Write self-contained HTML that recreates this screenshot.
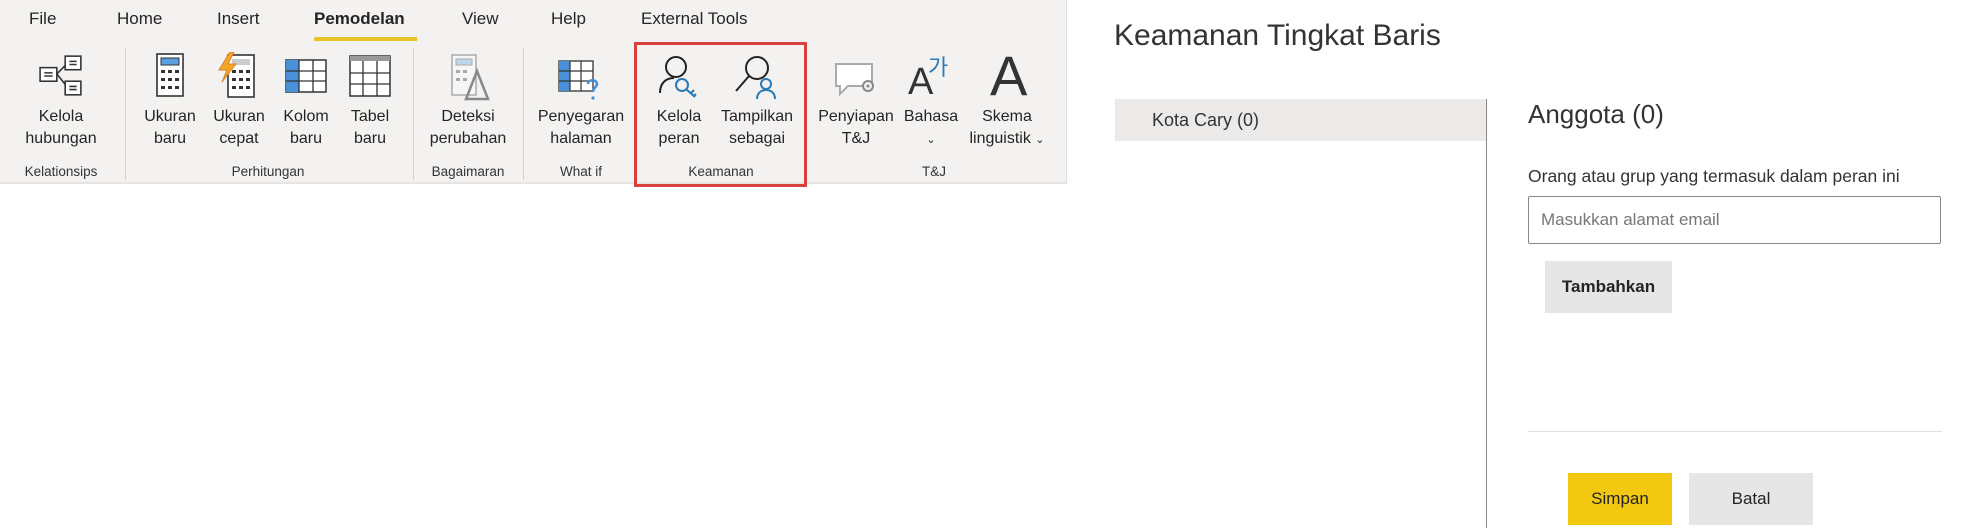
<!DOCTYPE html>
<html><head><meta charset="utf-8">
<style>
*{margin:0;padding:0;box-sizing:border-box}
body{width:1984px;height:528px;background:#fff;font-family:"Liberation Sans",sans-serif;color:#252423;position:relative;overflow:hidden}
.rib{position:absolute;left:0;top:0;width:1067px;height:184px;background:#f3f2f1;border-right:1px solid #e1dfdd;border-bottom:2px solid #e6e5e4}
.a{position:absolute;white-space:nowrap}
.tab{font-size:17px;top:9px}
.lbl{font-size:16px;line-height:22px;text-align:center;transform:translateX(-50%);top:106px}
.grp{font-size:13.5px;top:164px;transform:translateX(-50%);color:#333}
.sep{position:absolute;top:48px;width:1px;height:132px;background:#d2d0ce}
svg{position:absolute}
</style></head><body>
<div class="rib">
<div class="a tab" style="left:29px">File</div>
<div class="a tab" style="left:117px">Home</div>
<div class="a tab" style="left:217px">Insert</div>
<div class="a tab" style="left:314px;font-weight:bold">Pemodelan</div>
<div style="position:absolute;left:314px;top:37px;width:103px;height:4px;background:#e8c32a"></div>
<div class="a tab" style="left:462px">View</div>
<div class="a tab" style="left:551px">Help</div>
<div class="a tab" style="left:641px">External Tools</div>

<div class="sep" style="left:125px"></div>
<div class="sep" style="left:413px"></div>
<div class="sep" style="left:523px"></div>

<svg style="left:38px;top:53px" width="46" height="46" viewBox="0 0 44 44" fill="#fff" stroke="#333" stroke-width="1.5">
<rect x="2" y="14" width="16" height="13"/><rect x="26" y="3" width="15" height="13"/><rect x="26" y="27" width="15" height="13"/>
<path d="M18 20 L26 12 M18 20 L26 30 M6 19h8M6 22h8M30 8h7M30 11h7M30 32h7M30 35h7" fill="none"/></svg>

<svg style="left:156px;top:53px" width="28" height="44" viewBox="0 0 28 44"><rect x="1" y="1" width="26" height="42" fill="#fff" stroke="#333" stroke-width="1.6"/><rect x="5" y="5" width="18" height="7" fill="#5aa0e0" stroke="#333"/>
<g fill="#333"><rect x="5" y="17" width="4" height="3"/><rect x="12" y="17" width="4" height="3"/><rect x="19" y="17" width="4" height="3"/><rect x="5" y="25" width="4" height="3"/><rect x="12" y="25" width="4" height="3"/><rect x="19" y="25" width="4" height="3"/><rect x="5" y="33" width="4" height="3"/><rect x="12" y="33" width="4" height="3"/><rect x="19" y="33" width="4" height="3"/></g></svg>

<svg style="left:216px;top:52px" width="40" height="46" viewBox="0 0 40 46"><rect x="12" y="3" width="26" height="42" fill="#fff" stroke="#333" stroke-width="1.6"/><rect x="16" y="7" width="18" height="6" fill="#ccc"/>
<g fill="#333"><rect x="16" y="18" width="4" height="3"/><rect x="23" y="18" width="4" height="3"/><rect x="30" y="18" width="4" height="3"/><rect x="16" y="26" width="4" height="3"/><rect x="23" y="26" width="4" height="3"/><rect x="30" y="26" width="4" height="3"/><rect x="16" y="34" width="4" height="3"/><rect x="23" y="34" width="4" height="3"/><rect x="30" y="34" width="4" height="3"/></g>
<path d="M14 0 L3 18 H11 L6 30 L20 12 H12 L18 0Z" fill="#f5a623" stroke="#d9822b"/></svg>

<svg style="left:285px;top:59px" width="42" height="34" viewBox="0 0 42 34"><rect x="1" y="1" width="40" height="32" fill="#fff" stroke="#333" stroke-width="1.5"/><rect x="1" y="1" width="13" height="32" fill="#4a90d9"/><path d="M14 1V33M28 1V33M1 12H41M1 22H41" stroke="#333" stroke-width="1.3"/></svg>

<svg style="left:349px;top:55px" width="42" height="42" viewBox="0 0 42 42"><rect x="1" y="1" width="40" height="40" fill="#fff" stroke="#333" stroke-width="1.5"/><rect x="1" y="1" width="40" height="5" fill="#999"/><path d="M14 6V41M28 6V41M1 18H41M1 29H41" stroke="#333" stroke-width="1.3"/></svg>

<svg style="left:450px;top:53px" width="40" height="48" viewBox="0 0 40 48"><rect x="2" y="2" width="24" height="40" fill="#f6f6f6" stroke="#aaa" stroke-width="1.5"/><rect x="6" y="6" width="16" height="6" fill="#bcd6ee" stroke="#aaa"/><g fill="#aaa"><rect x="6" y="17" width="4" height="3"/><rect x="13" y="17" width="4" height="3"/><rect x="6" y="25" width="4" height="3"/><rect x="13" y="25" width="4" height="3"/></g><path d="M16 46 L27 18 L38 46Z" fill="none" stroke="#888" stroke-width="2.5"/></svg>

<svg style="left:558px;top:60px" width="46" height="44" viewBox="0 0 46 44"><rect x="1" y="1" width="34" height="30" fill="#fff" stroke="#333" stroke-width="1.3"/><rect x="1" y="1" width="11" height="30" fill="#4a90d9"/><path d="M12 1V31M23 1V31M1 11H35M1 21H35" stroke="#333" stroke-width="1.2"/><path d="M30 24c0-5 9-5 9 0c0 3-4 4-4 8" fill="none" stroke="#3d8fd9" stroke-width="2.4"/><circle cx="35" cy="38" r="1.6" fill="#3d8fd9"/></svg>

<svg style="left:658px;top:55px" width="46" height="44" viewBox="0 0 46 44" fill="none" stroke-width="2"><circle cx="18" cy="12" r="10" stroke="#222"/><path d="M2 38c0-10 6-15 14-15" stroke="#222"/><circle cx="24" cy="30" r="6" stroke="#2a7ab8"/><path d="M28 34l9 8M33 38l3-3M36 41l2-2" stroke="#2a7ab8"/></svg>

<svg style="left:733px;top:55px" width="46" height="44" viewBox="0 0 46 44" fill="none" stroke-width="2"><circle cx="24" cy="13" r="11" stroke="#222"/><path d="M16 21L3 36" stroke="#222"/><circle cx="33" cy="29" r="5" stroke="#2a7ab8"/><path d="M24 44c0-6 4-9 9-9s9 3 9 9" stroke="#2a7ab8"/></svg>

<svg style="left:834px;top:62px" width="44" height="36" viewBox="0 0 44 36"><path d="M2 2H38V24H14L6 32V24H2Z" fill="#fff" stroke="#aaa" stroke-width="2"/><circle cx="34" cy="24" r="5" fill="#f3f2f1" stroke="#888" stroke-width="2"/><circle cx="34" cy="24" r="1.5" fill="#888"/></svg>

<div class="a" style="left:908px;top:62px;font-size:38px;line-height:40px;color:#333">A</div>
<div class="a" style="left:928px;top:50px;font-size:22px;color:#2a7ab8;font-family:'Noto Sans CJK KR',sans-serif">가</div>
<div class="a" style="left:990px;top:48px;font-size:56px;line-height:56px;color:#333">A</div>

<div class="a lbl" style="left:61px">Kelola<br>hubungan</div>
<div class="a lbl" style="left:170px">Ukuran<br>baru</div>
<div class="a lbl" style="left:239px">Ukuran<br>cepat</div>
<div class="a lbl" style="left:306px">Kolom<br>baru</div>
<div class="a lbl" style="left:370px">Tabel<br>baru</div>
<div class="a lbl" style="left:468px">Deteksi<br>perubahan</div>
<div class="a lbl" style="left:581px">Penyegaran<br>halaman</div>
<div class="a lbl" style="left:679px">Kelola<br>peran</div>
<div class="a lbl" style="left:757px">Tampilkan<br>sebagai</div>
<div class="a lbl" style="left:856px">Penyiapan<br>T&amp;J</div>
<div class="a lbl" style="left:931px">Bahasa<br><span style="font-size:11px">&#8964;</span></div>
<div class="a lbl" style="left:1007px">Skema<br>linguistik <span style="font-size:11px">&#8964;</span></div>

<div class="a grp" style="left:61px">Kelationsips</div>
<div class="a grp" style="left:268px">Perhitungan</div>
<div class="a grp" style="left:468px">Bagaimaran</div>
<div class="a grp" style="left:581px">What if</div>
<div class="a grp" style="left:721px">Keamanan</div>
<div class="a grp" style="left:934px">T&amp;J</div>
</div>
<div style="position:absolute;left:634px;top:42px;width:173px;height:145px;border:3px solid #d9413f"></div>

<div class="a" style="left:1114px;top:19px;font-size:30px;color:#333">Keamanan Tingkat Baris</div>
<div style="position:absolute;left:1115px;top:99px;width:371px;height:42px;background:#ebeae9"></div>
<div class="a" style="left:1152px;top:110px;font-size:18px;color:#333">Kota Cary (0)</div>
<div style="position:absolute;left:1486px;top:99px;width:1px;height:429px;background:#8a8886"></div>
<div class="a" style="left:1528px;top:99px;font-size:26px;color:#333">Anggota (0)</div>
<div class="a" style="left:1528px;top:166px;font-size:17.5px;color:#333">Orang atau grup yang termasuk dalam peran ini</div>
<div style="position:absolute;left:1528px;top:196px;width:413px;height:48px;border:1px solid #8a8886;border-radius:2px"></div>
<div class="a" style="left:1541px;top:210px;font-size:17px;color:#777">Masukkan alamat email</div>
<div style="position:absolute;left:1545px;top:261px;width:127px;height:52px;background:#e6e6e6;font-size:17px;font-weight:bold;text-align:center;line-height:52px;color:#252423">Tambahkan</div>
<div style="position:absolute;left:1528px;top:431px;width:414px;height:1px;background:#e1dfdd"></div>
<div style="position:absolute;left:1568px;top:473px;width:104px;height:52px;background:#f2c811;font-size:17px;text-align:center;line-height:52px;color:#252423">Simpan</div>
<div style="position:absolute;left:1689px;top:473px;width:124px;height:52px;background:#e6e6e6;font-size:17px;text-align:center;line-height:52px;color:#252423">Batal</div>
</body></html>
